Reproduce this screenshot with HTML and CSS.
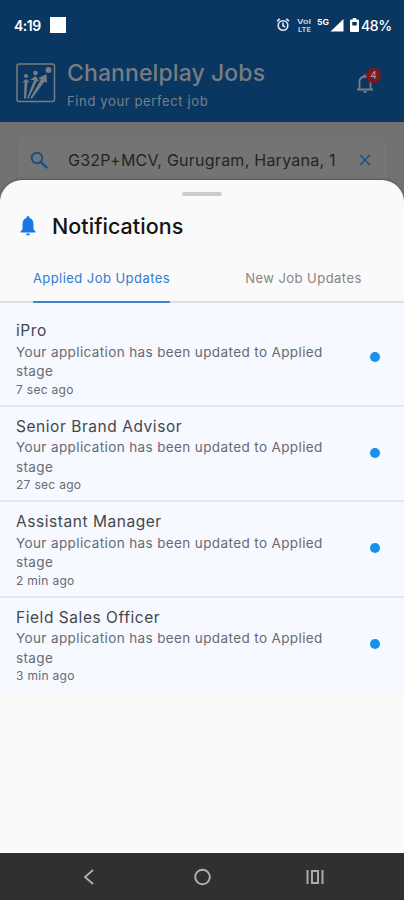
FILE: index.html
```
<!DOCTYPE html>
<html lang="en">
<head>
<meta charset="utf-8">
<title>Channelplay Jobs</title>
<link rel="stylesheet" href="styles.css">
</head>
<body>
<div class="phone">
  <header class="top">
    <div class="status">
      <span class="clock">4:19</span><span class="square"></span>
      <svg class="signals" width="68" height="18" viewBox="0 0 68 18">
        <g fill="none" stroke="#e4eaf5" stroke-width="1.600">
          <circle cx="7" cy="9.500" r="4.800"/><path d="M1 5.200 3.800 2.800M13 5.200l-2.800-2.400M7 6.500v3.300l2.200 1.200"/>
        </g>
        <g class="tiny"><text x="21" y="7.500" textLength="14" lengthAdjust="spacingAndGlyphs">VoI</text><text x="22" y="15.500" textLength="13" lengthAdjust="spacingAndGlyphs">LTE</text></g>
        <text class="fiveg" x="41" y="8.500" textLength="12" lengthAdjust="spacingAndGlyphs">5G</text>
        <path d="M54.500 15.500 67.500 3v12.500z" fill="#fff"/>
      </svg>
      <svg class="battery" width="9" height="14" viewBox="0 0 8 14" preserveAspectRatio="none"><path fill="#fff" fill-rule="evenodd" d="M2.500 0h3v1.500H7q1 0 1 1V13q0 1-1 1H1q-1 0-1-1V2.500q0-1 1-1h1.500zM2 4v3.500h4V4z"/></svg>
      <span class="percent">48%</span>
    </div>
    <div class="brand">
      <svg class="logo" width="40" height="40" viewBox="0 0 40 40">
        <rect x="1" y="1" width="37.500" height="37.500" rx="2" fill="none" stroke="#777d82" stroke-width="1.500"/>
        <g fill="#777d82"><circle cx="10" cy="13" r="2"/><circle cx="19.500" cy="10" r="2.300"/><circle cx="32.500" cy="7" r="3"/>
        <path d="M6 19.500 10 16l4 3.500-2.500-.500L10 35.500H8L8.500 19zM14 17l5.500-4 4 5.500-2.500-.500L12.500 35.500H11L18 17zM22.500 15l8-4 .500 9-2.500-1.500L16 35.500h-2L25 16.500z"/></g>
      </svg>
      <div class="names"><h1>Channelplay Jobs</h1><p>Find your perfect job</p></div>
      <div class="alert">
        <svg width="20" height="22" viewBox="0 0 20 22"><path d="M2 17.500h16M4.500 17V10q0-5 5.500-5.500 5.500.500 5.500 5.500v7" fill="none" stroke="#777d82" stroke-width="1.800"/><path d="M8.700 2.500h2.600v2H8.700zM8 19h4q-.500 2-2 2t-2-2" fill="#777d82"/></svg>
        <span class="badge">4</span>
      </div>
    </div>
  </header>
  <div class="search">
    <svg width="19" height="19" viewBox="0 0 19 19"><circle cx="7" cy="7" r="5.300" fill="none" stroke="#1b5286" stroke-width="2"/><path d="m11 11 6.200 6.200" stroke="#1b5286" stroke-width="2.400"/></svg>
    <span class="query">G32P+MCV, Gurugram, Haryana, 1</span>
    <svg width="12" height="12" viewBox="0 0 12 12"><path d="m1 1 10 10M11 1 1 11" stroke="#1b5286" stroke-width="1.600"/></svg>
  </div>
  <main class="sheet">
    <div class="handle"></div>
    <div class="heading">
      <svg width="16" height="20" viewBox="0 0 16 20"><path d="M8 0q1.500 0 1.500 2 4 1.200 4 6.500v5l2 2v1H.500v-1l2-2v-5q0-5.300 4-6.500Q6.500 0 8 0zM6 17.500h4q0 2-2 2t-2-2" fill="#1976e0"/></svg>
      <h2>Notifications</h2>
    </div>
    <nav class="tabs"><div class="tab"><span class="active">Applied Job Updates</span></div><div class="tab"><span class="idle">New Job Updates</span></div></nav>
    <section class="list">
      <article class="row"><div><h3>iPro</h3><p>Your application has been updated to Applied<br>stage</p><time>7 sec ago</time></div><i class="dot"></i></article>
      <article class="row"><div><h3>Senior Brand Advisor</h3><p>Your application has been updated to Applied<br>stage</p><time>27 sec ago</time></div><i class="dot"></i></article>
      <article class="row"><div><h3>Assistant Manager</h3><p>Your application has been updated to Applied<br>stage</p><time>2 min ago</time></div><i class="dot"></i></article>
      <article class="row"><div><h3>Field Sales Officer</h3><p>Your application has been updated to Applied<br>stage</p><time>3 min ago</time></div><i class="dot"></i></article>
    </section>
  </main>
  <footer class="keys">
    <svg width="12" height="16" viewBox="0 0 12 16"><path d="M10 1 2 8l8 7" fill="none" stroke="#b0b0b0" stroke-width="1.800"/></svg>
    <svg width="18" height="18" viewBox="0 0 18 18"><circle cx="9" cy="9" r="7.300" fill="none" stroke="#b0b0b0" stroke-width="2"/></svg>
    <svg width="18" height="16" viewBox="0 0 18 16"><path d="M1.500 1v14M16.500 1v14M6 2h6v12H6z" fill="none" stroke="#aaa" stroke-width="2"/></svg>
  </footer>
</div>
</body>
</html>
```
FILE: styles.css
```
* { box-sizing: border-box; margin: 0; padding: 0; }
body { font-family: Inter, sans-serif; background: #303030; }
.phone { width: 404px; height: 900px; display: flex; flex-direction: column; overflow: hidden; background: #727272; }
.top { height: 122px; flex: none; background: #0a3762; }
.status { height: 50px; display: flex; align-items: center; padding-left: 14px; color: #fff; }
.clock { width: 36px; font-size: 14px; font-weight: 600; letter-spacing: -.5px; }
.square { width: 16px; height: 16px; background: #fff; }
.signals { margin-left: 210px; flex: none; }
.tiny { font-size: 6px; font-weight: 700; fill: #c5cede; }
.fiveg { font-size: 8px; font-weight: 700; fill: #fff; }
.battery { margin-left: 6px; flex: none; }
.percent { margin-left: 2px; font-size: 14px; font-weight: 500; letter-spacing: -.4px; }
.brand { display: flex; padding: 8px 0 0 16px; height: 72px; }
.logo { margin-top: 5px; flex: none; }
.names { margin-left: 11px; width: 288px; color: #777d82; }
.names h1 { font-size: 23px; line-height: 30px; font-weight: 500; letter-spacing: .1px; }
.names p { font-size: 13px; line-height: 18px; margin-top: 4px; letter-spacing: .63px; font-weight: 400; color: #748088; }
.alert { position: relative; width: 30px; padding-top: 14px; }
.badge { position: absolute; left: 11px; top: 10px; width: 15px; height: 15px; border-radius: 50%; background: #7e1717; color: #aaa; font-size: 10px; line-height: 15px; text-align: center; }
.search { height: 60px; flex: none; margin: 12px 15px 0 16px; padding: 0 16px 8px 13px; display: flex; align-items: center; border: 1px solid #6d6d6d; border-radius: 12px; background: #747474; }
.query { margin-left: 19px; width: 291px; font-size: 16px; letter-spacing: .25px; color: #242424; white-space: nowrap; }
.sheet { position: relative; flex: none; margin-top: -14px; height: 673px; border-radius: 22px 22px 0 0; background: #fafafa; box-shadow: 0 -1px 2px #555; }
.handle { width: 40px; height: 4px; margin: 0 auto; transform: translateY(12px); border-radius: 2px; background: #ccc; }
.heading { height: 84px; display: flex; align-items: center; gap: 16px; padding: 0 20px; }
.heading h2 { font-size: 21.500px; font-weight: 500; color: #151515; letter-spacing: .05px; }
.tabs { height: 35px; display: grid; grid-template-columns: 1fr 1fr; border-bottom: 2px solid #dce0e2; }
.tab { text-align: center; font-size: 13px; line-height: 21px; letter-spacing: .45px; padding-left: 1px; }
.tab span { display: inline-block; height: 35px; color: #858585; }
.tab .active { color: #3479d2; border-bottom: 2px solid #4384d2; }
.list { padding-top: 8px; background: #f6f9ff; }
.row { height: 95.500px; padding: 9px 24px 0 16px; display: flex; justify-content: space-between; align-items: flex-start; border-bottom: 2px solid #e3e8ed; color: #666b72; }
.row:last-child { height: 94.500px; border-bottom: 0; }
.row h3 { font-size: 15.500px; line-height: 22.500px; font-weight: 400; letter-spacing: .55px; color: #44474b; }
.row p { font-size: 13.500px; line-height: 19.500px; letter-spacing: .38px; }
.row time { display: block; font-size: 12px; line-height: 16px; letter-spacing: .3px; }
.dot { width: 10px; height: 10px; margin-top: 32px; border-radius: 50%; background: #1890ee; }
.keys { height: 47px; flex: none; display: flex; justify-content: space-between; align-items: center; padding: 0 80px 0 83px; background: #303030; }
.keys svg:nth-child(2) { transform: translateX(1.500px); }
```
